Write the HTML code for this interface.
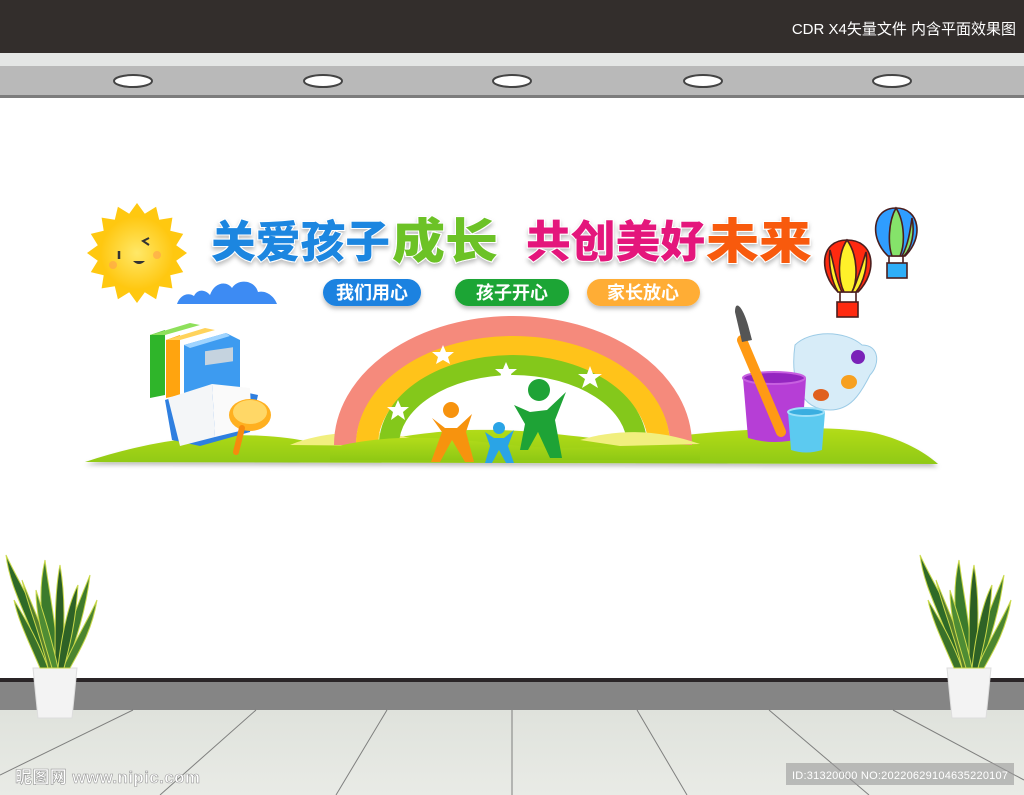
<!DOCTYPE html>
<html><head><meta charset="utf-8"><style>
html,body{margin:0;padding:0;width:1024px;height:795px;overflow:hidden;background:#fff}
svg{display:block}
.t{font-family:"Liberation Sans","Noto Sans CJK SC",sans-serif;font-weight:900}
</style></head><body>
<svg width="1024" height="795" viewBox="0 0 1024 795" xmlns="http://www.w3.org/2000/svg">
<defs>
<linearGradient id="floor" x1="0" y1="0" x2="0" y2="1"><stop offset="0" stop-color="#dfe2dc"/><stop offset="1" stop-color="#e9ebe6"/></linearGradient>
<linearGradient id="grass" x1="0" y1="0" x2="0" y2="1"><stop offset="0" stop-color="#b3dc1a"/><stop offset="1" stop-color="#8fc914"/></linearGradient>
<radialGradient id="sun"><stop offset="0" stop-color="#ffe868"/><stop offset="1" stop-color="#ffc812"/></radialGradient>
<filter id="sh" x="-10%" y="-10%" width="120%" height="140%"><feDropShadow dx="0" dy="3" stdDeviation="2" flood-color="#000" flood-opacity="0.25"/></filter>
</defs>
<rect x="0" y="0" width="1024" height="53" fill="#332e2c"/>
<text x="1016" y="34" text-anchor="end" font-family="Liberation Sans,'Noto Sans CJK SC',sans-serif" font-size="15" fill="#fff">CDR X4矢量文件  内含平面效果图</text>
<rect x="0" y="53" width="1024" height="13" fill="#e4e6e5"/>
<rect x="0" y="66" width="1024" height="31" fill="#b9b9b9"/>
<rect x="0" y="95" width="1024" height="3" fill="#7c7c7c"/>
<g fill="#fff" stroke="#444" stroke-width="2">
<ellipse cx="133" cy="81" rx="19" ry="6"/><ellipse cx="323" cy="81" rx="19" ry="6"/><ellipse cx="512" cy="81" rx="19" ry="6"/><ellipse cx="703" cy="81" rx="19" ry="6"/><ellipse cx="892" cy="81" rx="19" ry="6"/>
</g>
<rect x="0" y="678" width="1024" height="4" fill="#2a2527"/>
<rect x="0" y="682" width="1024" height="28" fill="#858585"/>
<rect x="0" y="710" width="1024" height="85" fill="url(#floor)"/>
<g stroke="#666" stroke-width="1" opacity="0.8">
<line x1="133" y1="710" x2="0" y2="775"/><line x1="256" y1="710" x2="160" y2="795"/><line x1="387" y1="710" x2="336" y2="795"/><line x1="512" y1="710" x2="512" y2="795"/><line x1="637" y1="710" x2="687" y2="795"/><line x1="769" y1="710" x2="869" y2="795"/><line x1="893" y1="710" x2="1024" y2="780"/>
</g>
<text x="15" y="783" font-family="Liberation Sans,'Noto Sans CJK SC',sans-serif" font-size="17" font-weight="bold" fill="#fff" stroke="#999" stroke-width="0.6" textLength="185">昵图网 www.nipic.com</text>
<rect x="786" y="763" width="228" height="22" fill="#999" opacity="0.6"/>
<text x="792" y="779" font-family="Liberation Sans,sans-serif" font-size="11" fill="#fff" textLength="216">ID:31320000 NO:20220629104635220107</text>
<g id="plant">
<path d="M33 668 L77 668 L72 718 L38 718 Z" fill="#f3f3f3" stroke="#ddd"/>
<g stroke="#c9d84a" stroke-width="1">
<path d="M45 668 C30 620 10 590 6 555 C22 590 45 620 52 668Z" fill="#2f6a28"/>
<path d="M50 668 C40 620 38 590 45 560 C50 600 58 630 57 668Z" fill="#3b7a2c"/>
<path d="M55 668 C55 620 55 590 60 565 C66 600 64 630 62 668Z" fill="#2c5e24"/>
<path d="M60 668 C66 630 80 600 90 575 C86 610 76 640 66 668Z" fill="#3f7a2c"/>
<path d="M63 668 C75 640 88 620 97 600 C92 630 80 650 70 668Z" fill="#4b8530"/>
<path d="M40 668 C28 640 18 620 14 600 C26 620 38 640 48 668Z" fill="#3a722a"/>
<path d="M48 668 C42 640 26 600 22 580 C34 610 48 640 55 668Z" fill="#567f2e"/>
<path d="M58 668 C62 630 70 600 78 585 C76 620 70 645 64 668Z" fill="#2e6226"/>
<path d="M52 668 C44 640 36 620 36 590 C44 615 52 640 58 668Z" fill="#4f8c34"/>
</g>
</g>
<use href="#plant" transform="translate(914 0)"/>
<path d="M85 462 C150 440 230 428 300 440 C360 450 400 432 470 430 C560 428 600 446 660 438 C740 428 820 425 870 432 C900 438 925 452 938 464 Z" fill="url(#grass)" filter="url(#sh)"/>
<path d="M290 445 C320 432 370 428 410 438 L390 446 Z" fill="#f1ef7e"/>
<g fill="none">
<path d="M345 445 A168 118 0 0 1 681 445" stroke="#f58a7c" stroke-width="22"/>
<path d="M367 445 A146 98 0 0 1 659 445" stroke="#ffc31a" stroke-width="22"/>
<path d="M389 445 A124 80 0 0 1 637 445" stroke="#84c81b" stroke-width="20"/>
</g>
<path d="M330 448 C400 430 460 440 520 446 C600 452 650 440 700 446 L700 460 L330 460Z" fill="url(#grass)"/>
<path d="M580 440 C620 428 660 430 700 444 L620 446Z" fill="#f1ef7e"/>
<g fill="#fff">
<polygon points="443,345 446,352 454,352 448,357 450,364 443,360 436,364 438,357 432,352 440,352"/>
<polygon points="506,362 509,369 517,369 511,374 513,381 506,377 499,381 501,374 495,369 503,369"/>
<polygon points="590,366 593,374 602,374 595,379 598,388 590,383 582,388 585,379 578,374 587,374"/>
<polygon points="398,400 401,407 409,407 403,412 405,420 398,415 391,420 393,412 387,407 395,407"/>
</g>
<circle cx="451" cy="410" r="8" fill="#f7930e"/>
<path d="M432 418 L445 428 L457 428 L472 414 L466 432 L474 462 L465 462 L452 440 L440 462 L431 462 L442 432 Z" fill="#f7930e"/>
<circle cx="499" cy="428" r="6" fill="#2aa4e6"/>
<path d="M485 432 L494 438 L504 438 L514 430 L508 446 L514 463 L506 463 L499 450 L492 463 L485 463 L490 446 Z" fill="#2aa4e6"/>
<circle cx="539" cy="390" r="11" fill="#1ea336"/>
<path d="M514 405 L530 412 L547 410 L566 392 L555 420 L562 458 L550 458 L538 432 L528 450 L520 450 L525 424 Z" fill="#1ea336"/>
<path d="M150 335 L165 330 L165 395 L150 398 Z" fill="#2fb52a"/>
<path d="M150 335 L190 323 L200 325 L165 335Z" fill="#8ee05b"/>
<path d="M166 340 L180 335 L180 395 L166 398 Z" fill="#ffa40f"/>
<path d="M166 340 L205 328 L215 330 L180 340Z" fill="#ffd35b"/>
<path d="M184 345 L226 333 L240 340 L240 390 L184 395Z" fill="#3d9bf0"/>
<path d="M184 345 L226 333 L230 336 L190 348Z" fill="#9fd4ff"/>
<rect x="205" y="350" width="28" height="14" fill="#c5d3df" transform="skewY(-8) translate(0 30)"/>
<path d="M165 400 L212 385 L258 395 L250 432 L200 446 L172 440 Z" fill="#2f7fe0"/>
<path d="M168 398 L212 384 L215 437 L180 446 Z" fill="#f4f6f8"/>
<path d="M212 384 L250 388 L252 428 L215 437 Z" fill="#fafafa"/>
<ellipse cx="250" cy="415" rx="21" ry="16" fill="#ffb020"/>
<ellipse cx="250" cy="412" rx="17" ry="12" fill="#ffd766"/>
<path d="M242 428 L236 452" stroke="#f78a0e" stroke-width="6" stroke-linecap="round"/>
<g transform="translate(137 253)">
<polygon fill="#ffc810" points="50,0 39.2,7.8 46.2,19.1 33.3,22.2 35.4,35.4 22.2,33.3 19.1,46.2 7.8,39.2 0,50 -7.8,39.2 -19.1,46.2 -22.2,33.3 -35.4,35.4 -33.3,22.2 -46.2,19.1 -39.2,7.8 -50,0 -39.2,-7.8 -46.2,-19.1 -33.3,-22.2 -35.4,-35.4 -22.2,-33.3 -19.1,-46.2 -7.8,-39.2 0,-50 7.8,-39.2 19.1,-46.2 22.2,-33.3 35.4,-35.4 33.3,-22.2 46.2,-19.1 39.2,-7.8"/>
<circle r="36" fill="url(#sun)"/>
<path d="M-18 -2 L-18 6" stroke="#333" stroke-width="2.5"/>
<path d="M12 -8 L6 -12 L12 -15" stroke="#333" stroke-width="2" fill="none"/>
<path d="M-4 8 Q2 14 8 8 Z" fill="#333"/>
<circle cx="-24" cy="12" r="4" fill="#ffa050" opacity="0.6"/><circle cx="20" cy="2" r="4" fill="#ffa050" opacity="0.6"/>
</g>
<path d="M177 304 C180 295 188 292 194 296 C198 288 206 290 210 295 C214 283 226 280 232 288 C238 278 255 280 258 292 C266 290 274 296 277 304 Z" fill="#3d8bf3"/>
<g class="t" font-size="44" stroke="#fff" stroke-width="2" paint-order="stroke" filter="url(#sh)">
<text x="211" y="257" fill="#1a86e0" textLength="179" lengthAdjust="spacingAndGlyphs">关爱孩子</text>
<text x="392" y="258" fill="#6cc228" font-size="48" textLength="106" lengthAdjust="spacingAndGlyphs">成长</text>
<text x="526" y="257" fill="#e4187b" textLength="179" lengthAdjust="spacingAndGlyphs">共创美好</text>
<text x="706" y="258" fill="#f85a10" font-size="48" textLength="106" lengthAdjust="spacingAndGlyphs">未来</text>
</g>
<g filter="url(#sh)">
<rect x="323" y="279" width="98" height="27" rx="13.5" fill="#1a82e0"/>
<rect x="455" y="279" width="114" height="27" rx="13.5" fill="#1fa534"/>
<rect x="587" y="279" width="113" height="27" rx="13.5" fill="#ffad36"/>
</g>
<g font-family="Liberation Sans,'Noto Sans CJK SC',sans-serif" font-size="18" font-weight="bold" fill="#fff" text-anchor="middle">
<text x="372" y="299">我们用心</text><text x="512" y="299">孩子开心</text><text x="643" y="299">家长放心</text>
</g>
<g stroke="#4a1e1e" stroke-width="1.6">
<path d="M847 240 C875 240 878 272 858 292 L838 292 C818 272 820 240 847 240Z" fill="#ff2a10"/>
<path d="M847 240 C837 255 838 280 844 292 L852 292 C858 280 858 255 847 240Z" fill="#fff12a"/>
<path d="M830 250 C828 265 832 282 838 292 L842 292 C836 280 834 265 830 250Z" fill="#fff12a"/>
<path d="M866 252 C868 265 864 282 856 292 L852 292 C858 280 862 265 866 252Z" fill="#fff12a"/>
<path d="M840 292 L840 303 M856 292 L856 303" fill="none"/>
<rect x="837" y="302" width="21" height="15" fill="#ff2a10"/>
<path d="M896 208 C920 208 924 238 905 256 L888 256 C869 238 872 208 896 208Z" fill="#2f9dff"/>
<path d="M896 208 C888 222 888 245 892 256 L900 256 C905 245 905 222 896 208Z" fill="#85e36a"/>
<path d="M912 218 C915 232 912 248 904 256 L902 256 C908 245 910 232 912 218Z" fill="#85e36a"/>
<path d="M889 256 L889 264 M903 256 L903 264" fill="none"/>
<rect x="887" y="263" width="20" height="15" fill="#2faef8"/>
</g>
<path d="M795 345 C810 330 845 330 862 345 C880 345 880 365 870 375 C860 395 850 410 830 410 C800 410 790 380 795 345Z" fill="#d7ecf8" stroke="#9ccbe6"/>
<ellipse cx="858" cy="357" rx="7" ry="7" fill="#7a22b8"/>
<ellipse cx="849" cy="382" rx="8" ry="7" fill="#f7a020"/>
<ellipse cx="821" cy="395" rx="8" ry="6" fill="#e0601e"/>
<path d="M743 378 L806 378 L802 438 Q775 446 748 438Z" fill="#b63ed6"/>
<ellipse cx="774" cy="378" rx="31" ry="6" fill="#9426c0" stroke="#c760e0" stroke-width="2"/>
<path d="M742 340 L781 432" stroke="#ff9a14" stroke-width="10" stroke-linecap="round"/>
<path d="M735 312 C735 300 742 305 748 325 L752 340 L742 342 Z" fill="#555"/>
<path d="M788 412 L825 412 L822 450 Q806 455 791 450Z" fill="#5ccaf0"/>
<ellipse cx="806" cy="412" rx="18" ry="4" fill="#3aaee0" stroke="#9ee0f8" stroke-width="2"/>
</svg>
</body></html>
